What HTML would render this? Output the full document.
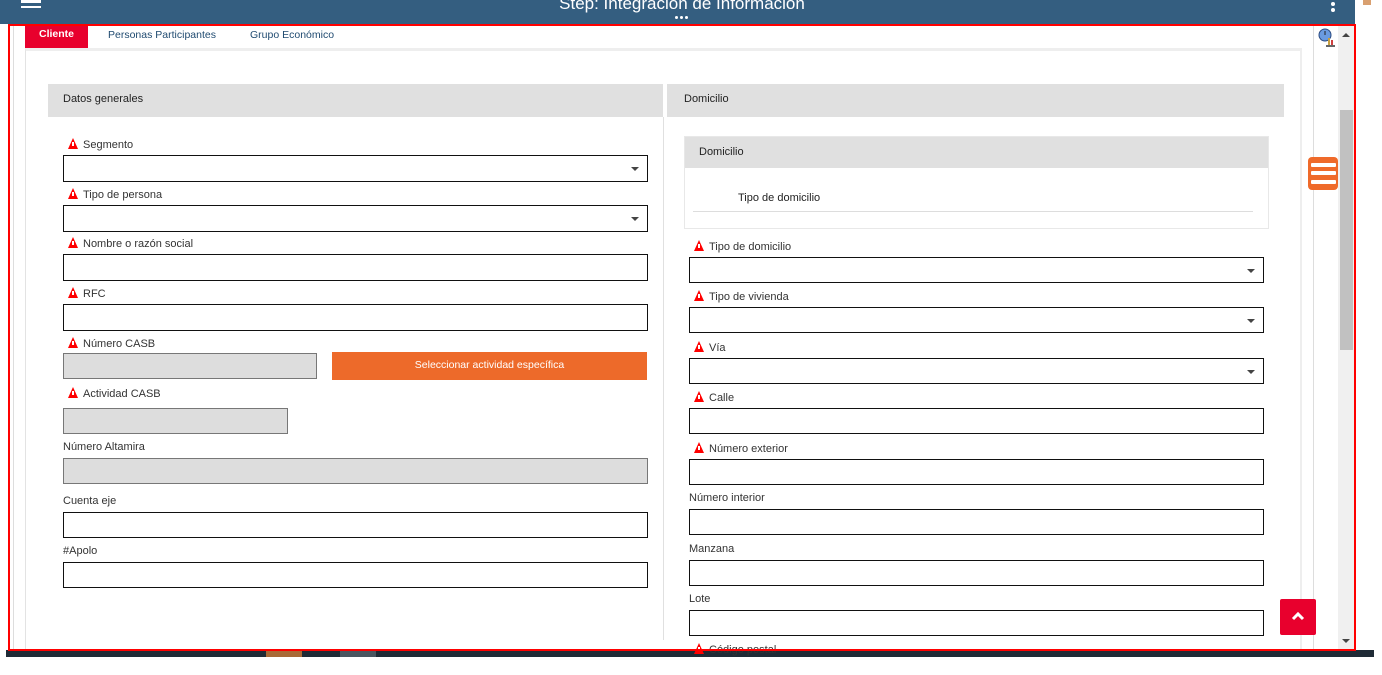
<!DOCTYPE html>
<html><head><meta charset="utf-8"><style>
*{margin:0;padding:0;box-sizing:border-box}
body{width:1382px;height:675px;position:relative;background:#fff;font-family:"Liberation Sans",sans-serif;overflow:hidden;color:#333}
.a{position:absolute}
.lbl{position:absolute;font-size:11px;color:#333;line-height:12px;white-space:nowrap;margin-top:1px}
.w{display:inline-block;width:0;height:0;border-left:5.5px solid transparent;border-right:5.5px solid transparent;border-bottom:11px solid #f00;margin-right:5px;vertical-align:-1px;position:relative}
.w:after{content:"";position:absolute;left:-1px;top:4px;width:2px;height:4px;background:#fff}
.in{position:absolute;border:1px solid #111;background:#fff;height:27px}
.g{background:#ddd;border-color:#777}
.dd:after{content:"";position:absolute;right:8px;top:11px;border-left:4px solid transparent;border-right:4px solid transparent;border-top:4px solid #444}
.hd{position:absolute;background:#e0e0e0;font-size:11px;color:#222;padding-left:15px}
</style></head><body>
<div class="a" style="left:0;top:0;width:1355px;height:24px;background:#345e80"></div>
<div class="a" style="left:0;top:-6px;width:1364px;text-align:center;color:#fff;font-size:17px">Step: Integración de Información</div>
<div class="a" style="left:675px;top:16px;width:3px;height:3px;border-radius:2px;background:#fff"></div>
<div class="a" style="left:680px;top:16px;width:3px;height:3px;border-radius:2px;background:#fff"></div>
<div class="a" style="left:685px;top:16px;width:3px;height:3px;border-radius:2px;background:#fff"></div>
<div class="a" style="left:21px;top:0;width:20px;height:3px;background:#fff"></div>
<div class="a" style="left:21px;top:6px;width:20px;height:2px;background:#fff"></div>
<div class="a" style="left:1331px;top:2px;width:4px;height:4px;border-radius:2px;background:#fff"></div>
<div class="a" style="left:1331px;top:8px;width:4px;height:4px;border-radius:2px;background:#fff"></div>

<div class="a" style="left:6px;top:650px;width:1368px;height:7px;background:#1f2b36"></div>
<div class="a" style="left:266px;top:650px;width:36px;height:7px;background:#a86a36"></div>
<div class="a" style="left:340px;top:650px;width:36px;height:7px;background:#4a5660"></div>

<div class="a" style="left:13px;top:26px;width:1px;height:624px;background:#ddd"></div>
<div class="a" style="left:25px;top:48px;width:1277px;height:602px;border-left:1px solid #e3e3e3;border-top:3px solid #eee;border-right:2px solid #eee"></div>
<div class="a" style="left:1313px;top:26px;width:1px;height:624px;background:#ddd"></div>
<div class="a" style="left:1338px;top:26px;width:16px;height:624px;background:#f0f0f0"></div>
<div class="a" style="left:1340px;top:110px;width:13px;height:240px;background:#c1c1c1"></div>
<div class="a" style="left:1342px;top:33px;border-left:4px solid transparent;border-right:4px solid transparent;border-bottom:4px solid #444"></div>
<div class="a" style="left:1342px;top:639px;border-left:4px solid transparent;border-right:4px solid transparent;border-top:4px solid #444"></div>
<svg class="a" style="left:1318px;top:26px" width="20" height="22"><circle cx="7" cy="9" r="6" fill="#6a9be0" stroke="#2a4a80"/><line x1="7" y1="9" x2="7" y2="5" stroke="#222"/><rect x="10" y="12" width="2" height="8" fill="#c8a040"/><rect x="13" y="14" width="2" height="6" fill="#d04040"/><rect x="8" y="19" width="9" height="2" fill="#666"/></svg>

<div class="a" style="left:25px;top:25px;width:63px;height:23px;background:#e8002d;color:#fff;font-size:10.5px;font-weight:bold;text-align:center;line-height:19px">Cliente</div>
<div class="lbl" style="left:108px;top:28px;color:#1f4a70;font-size:10.5px">Personas Participantes</div>
<div class="lbl" style="left:250px;top:28px;color:#1f4a70;font-size:10.5px">Grupo Económico</div>

<div class="hd" style="left:48px;top:84px;width:615px;height:33px;line-height:31px">Datos generales</div>
<div class="hd" style="left:667px;top:84px;width:617px;height:33px;line-height:31px;padding-left:17px">Domicilio</div>
<div class="a" style="left:663px;top:117px;width:1px;height:523px;background:#e0e0e0"></div>

<div class="lbl" style="left:68px;top:137px"><span class="w"></span>Segmento</div>
<div class="in dd" style="left:63px;top:155px;width:585px"></div>
<div class="lbl" style="left:68px;top:187px"><span class="w"></span>Tipo de persona</div>
<div class="in dd" style="left:63px;top:205px;width:585px"></div>
<div class="lbl" style="left:68px;top:236px"><span class="w"></span>Nombre o razón social</div>
<div class="in" style="left:63px;top:254px;width:585px"></div>
<div class="lbl" style="left:68px;top:286px"><span class="w"></span>RFC</div>
<div class="in" style="left:63px;top:304px;width:585px"></div>
<div class="lbl" style="left:68px;top:336px"><span class="w"></span>Número CASB</div>
<div class="in g" style="left:63px;top:353px;width:254px;height:26px"></div>
<div class="a" style="left:332px;top:352px;width:315px;height:28px;background:#ed6a2a;color:#fff;font-size:10.5px;text-align:center;line-height:27px">Seleccionar actividad específica</div>
<div class="lbl" style="left:68px;top:386px"><span class="w"></span>Actividad CASB</div>
<div class="in g" style="left:63px;top:408px;width:225px;height:26px"></div>
<div class="lbl" style="left:63px;top:440px">Número Altamira</div>
<div class="in g" style="left:63px;top:458px;width:585px;height:26px"></div>
<div class="lbl" style="left:63px;top:494px">Cuenta eje</div>
<div class="in" style="left:63px;top:512px;width:585px;height:26px"></div>
<div class="lbl" style="left:63px;top:544px">#Apolo</div>
<div class="in" style="left:63px;top:562px;width:585px;height:26px"></div>

<div class="a" style="left:684px;top:136px;width:585px;height:93px;border:1px solid #e8e8e8"></div>
<div class="hd" style="left:685px;top:137px;width:583px;height:31px;line-height:30px;padding-left:14px">Domicilio</div>
<div class="lbl" style="left:738px;top:191px;color:#222">Tipo de domicilio</div>
<div class="a" style="left:693px;top:211px;width:560px;height:1px;background:#ddd"></div>

<div class="lbl" style="left:694px;top:239px"><span class="w"></span>Tipo de domicilio</div>
<div class="in dd" style="left:689px;top:257px;width:575px;height:26px"></div>
<div class="lbl" style="left:694px;top:289px"><span class="w"></span>Tipo de vivienda</div>
<div class="in dd" style="left:689px;top:307px;width:575px;height:26px"></div>
<div class="lbl" style="left:694px;top:340px"><span class="w"></span>Vía</div>
<div class="in dd" style="left:689px;top:358px;width:575px;height:26px"></div>
<div class="lbl" style="left:694px;top:390px"><span class="w"></span>Calle</div>
<div class="in" style="left:689px;top:408px;width:575px;height:26px"></div>
<div class="lbl" style="left:694px;top:441px"><span class="w"></span>Número exterior</div>
<div class="in" style="left:689px;top:459px;width:575px;height:26px"></div>
<div class="lbl" style="left:689px;top:491px">Número interior</div>
<div class="in" style="left:689px;top:509px;width:575px;height:26px"></div>
<div class="lbl" style="left:689px;top:542px">Manzana</div>
<div class="in" style="left:689px;top:560px;width:575px;height:26px"></div>
<div class="lbl" style="left:689px;top:592px">Lote</div>
<div class="in" style="left:689px;top:610px;width:575px;height:26px"></div>
<div class="lbl" style="left:694px;top:642px"><span class="w"></span>Código postal</div>

<div class="a" style="left:1308px;top:157px;width:30px;height:33px;background:#ef6a2a;border-radius:4px"></div>
<div class="a" style="left:1311px;top:163px;width:25px;height:4px;background:#fff;border-radius:1px"></div>
<div class="a" style="left:1311px;top:171px;width:25px;height:4px;background:#fff;border-radius:1px"></div>
<div class="a" style="left:1311px;top:180px;width:25px;height:4px;background:#fff;border-radius:1px"></div>
<div class="a" style="left:1280px;top:599px;width:36px;height:36px;background:#e8002d;border-radius:2px"></div>
<svg class="a" style="left:1291px;top:611px" width="14" height="10"><path d="M2 8 L7 3 L12 8" stroke="#fff" stroke-width="3" fill="none"/></svg>

<div class="a" style="left:8px;top:24px;width:1348px;height:627px;border:2px solid #f00"></div>
<div class="a" style="left:1356px;top:0;width:26px;height:650px;background:#fff"></div>
<div class="a" style="left:1363px;top:0;width:8px;height:5px;background:#d9a070"></div>
</body></html>
